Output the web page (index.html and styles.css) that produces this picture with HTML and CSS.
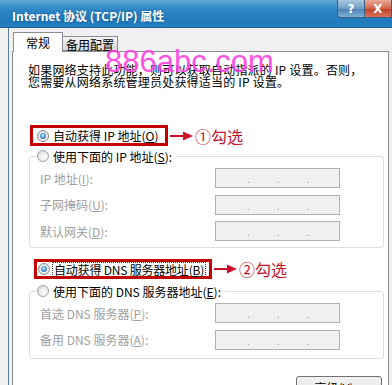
FILE: index.html
```html
<!DOCTYPE html>
<html lang="zh-CN">
<head>
    <meta charset="UTF-8">
    <title>Internet 协议 (TCP/IP) 属性</title>
    <link rel="stylesheet" href="styles.css">
</head>
<body>
    <div class="titlebar">
        <span class="title">Internet 协议 (TCP/IP) 属性</span>
        <div class="captionBtns">
            <span class="helpBtn">?</span>
            <span class="closeBtn">X</span>
        </div>
    </div>

    <div class="frame">
        <div class="tabs">
            <div class="tab active">常规</div>
            <div class="tab">备用配置</div>
        </div>

        <div class="panel">
            <p class="intro">如果网络支持此功能，则可以获取自动指派的 IP 设置。否则，<br>您需要从网络系统管理员处获得适当的 IP 设置。</p>

            <div class="markRow markOne">
                <div class="redBox">
                    <span class="radio checked"></span>
                    <span>自动获得 IP 地址(<u>O</u>)</span>
                </div>
                <svg class="arrow" width="24" height="10" viewBox="0 0 24 10">
                    <line x1="0" y1="5" x2="15" y2="5" stroke="#c8102e" stroke-width="2"/>
                    <polygon points="13,0.5 23,5 13,9.5" fill="#c8102e"/>
                </svg>
                <span class="note">①勾选</span>
            </div>

            <fieldset class="group groupIp">
                <legend><span class="radio"></span><span>使用下面的 IP 地址(<u>S</u>):</span></legend>
                <div class="row">
                    <label>IP 地址(<u>I</u>):</label>
                    <span class="ipBox"><i>.</i><i>.</i><i>.</i></span>
                </div>
                <div class="row">
                    <label>子网掩码(<u>U</u>):</label>
                    <span class="ipBox"><i>.</i><i>.</i><i>.</i></span>
                </div>
                <div class="row">
                    <label>默认网关(<u>D</u>):</label>
                    <span class="ipBox"><i>.</i><i>.</i><i>.</i></span>
                </div>
            </fieldset>

            <div class="markRow markTwo">
                <div class="redBox">
                    <span class="radio checked"></span>
                    <span class="focus">自动获得 DNS 服务器地址(<u>B</u>)</span>
                </div>
                <svg class="arrow" width="24" height="10" viewBox="0 0 24 10">
                    <line x1="0" y1="5" x2="15" y2="5" stroke="#c8102e" stroke-width="2"/>
                    <polygon points="13,0.5 23,5 13,9.5" fill="#c8102e"/>
                </svg>
                <span class="note">②勾选</span>
            </div>

            <fieldset class="group groupDns">
                <legend><span class="radio"></span><span>使用下面的 DNS 服务器地址(<u>E</u>):</span></legend>
                <div class="row">
                    <label>首选 DNS 服务器(<u>P</u>):</label>
                    <span class="ipBox"><i>.</i><i>.</i><i>.</i></span>
                </div>
                <div class="row">
                    <label>备用 DNS 服务器(<u>A</u>):</label>
                    <span class="ipBox"><i>.</i><i>.</i><i>.</i></span>
                </div>
            </fieldset>

            <div class="buttonRow">
                <button class="advBtn">高级(<u>V</u>)...</button>
            </div>
        </div>
    </div>

    <div class="watermark">886abc.com</div>
</body>
</html>
```

FILE: styles.css
```css
*{
    margin: 0;
    padding: 0;
    box-sizing: border-box;
}
body{
    width: 392px;
    height: 385px;
    overflow: hidden;
    position: relative;
    background-color: #f0f0f0;
    font-family: "Noto Sans CJK SC", sans-serif;
    font-size: 12px;
    color: #000;
}
u{
    text-decoration: underline;
}

/* title bar */
.titlebar{
    height: 28px;
    display: flex;
    justify-content: space-between;
    background: linear-gradient(#5ea6d6, #2f88c6 35%, #1f79bb 80%, #2a82c2);
    border-bottom: 1px solid #1a5e92;
}
.title{
    color: #fff;
    font-weight: bold;
    font-size: 12px;
    line-height: 28px;
    padding: 2px 0 0 12px;
    text-shadow: 0 0 3px #1d5a8a;
}
.captionBtns{
    display: flex;
    height: 18px;
    align-self: flex-start;
}
.helpBtn, .closeBtn{
    display: flex;
    align-items: center;
    justify-content: center;
    height: 18px;
    color: #fff;
    font-family: "DejaVu Sans", sans-serif;
    font-weight: bold;
    font-size: 12px;
    border: 1px solid #3b5f82;
    border-top: none;
}
.helpBtn{
    width: 28px;
    border-radius: 0 0 0 4px;
    background: linear-gradient(#a9c8e0, #6f9dc4 50%, #4f86b6 55%, #7eb1d6);
}
.closeBtn{
    width: 27px;
    border-left: none;
    background: linear-gradient(#e9a99a, #d4644c 50%, #c2412a 55%, #d9735c);
}

/* dialog frame + tabs */
.frame{
    margin-left: 8px;
    border-left: 1px solid #5f7f9e;
    padding: 4px 3px 0 3px;
    height: 357px;
}
.tabs{
    display: flex;
    height: 20px;
    padding-left: 1px;
}
.tab{
    display: flex;
    align-items: center;
    justify-content: center;
    border: 1px solid #898c95;
}
.tab.active{
    width: 50px;
    height: 20px;
    background-color: #fff;
    border-bottom: none;
    position: relative;
    z-index: 1;
    padding-bottom: 1px;
}
.tab:not(.active){
    width: 55px;
    height: 15px;
    align-self: flex-end;
    margin-bottom: 1px;
    border-left: none;
    background: linear-gradient(#f4f4f4, #e6e6e6 50%, #d9d9d9);
    padding-top: 1px;
}
.panel{
    margin-top: -1px;
    height: 340px;
    background-color: #fff;
    border: 1px solid #898c95;
    border-bottom: none;
    padding: 12px 0 0 15px;
}
.intro{
    line-height: 12px;
    white-space: nowrap;
    letter-spacing: 0.2px;
}

/* red highlighted choices */
.markRow{
    display: flex;
    align-items: center;
    white-space: nowrap;
}
.markOne{
    margin: 37px 0 0 2px;
    height: 21px;
}
.markTwo{
    margin: 11px 0 0 6px;
    height: 20px;
}
.redBox{
    display: flex;
    align-items: center;
    gap: 4px;
    height: 100%;
    border: 3px solid #c40000;
    padding-left: 4px;
    flex-shrink: 0;
}
.markOne .redBox{
    width: 138px;
}
.markTwo .redBox{
    width: 178px;
    padding-left: 1px;
    gap: 3px;
}
.focus{
    outline: 1px dotted #333;
    padding: 0 1px;
    line-height: 13px;
    letter-spacing: -0.2px;
}
.arrow{
    margin-left: 2px;
    flex-shrink: 0;
}
.note{
    color: #c8102e;
    font-size: 16px;
    line-height: 20px;
    margin-left: 1px;
}

/* radio buttons */
.radio{
    width: 12px;
    height: 12px;
    border-radius: 50%;
    border: 1px solid #a2a2a2;
    background: radial-gradient(circle at 60% 65%, #ffffff, #e2e2e2 70%, #cfcfcf);
    display: inline-flex;
    align-items: center;
    justify-content: center;
    flex-shrink: 0;
}
.radio.checked{
    border-color: #8b8b8b;
}
.radio.checked::after{
    content: "";
    width: 6px;
    height: 6px;
    border-radius: 50%;
    background: radial-gradient(circle at 45% 40%, #cfeaff, #4d97d2 50%, #123f77);
}

/* group boxes */
.group{
    margin-left: 1px;
    width: 355px;
    border: 1px solid #d5dfe5;
    border-radius: 3px;
    padding: 5px 0 6px 10px;
}
.groupIp{
    margin-top: 3px;
}
.groupDns{
    margin-top: 5px;
    padding-bottom: 8px;
}
.group legend{
    display: flex;
    align-items: center;
    gap: 4px;
    height: 14px;
    margin-left: -4px;
    padding: 0 4px 0 1px;
    white-space: nowrap;
}
.row{
    display: flex;
    align-items: center;
    height: 20px;
}
.row + .row{
    margin-top: 6.5px;
}
.row label{
    width: 175px;
    color: #a0a0a0;
}
.ipBox{
    display: flex;
    width: 125px;
    height: 20px;
    background-color: #f0f0f0;
    border: 1px solid #b0b0b0;
    padding-left: 31px;
    gap: 27px;
    color: #9a9a9a;
    font-size: 10px;
    line-height: 20px;
}
.ipBox i{
    font-style: normal;
}

/* bottom button */
.buttonRow{
    display: flex;
    justify-content: flex-end;
    padding-right: 6px;
    margin-top: 17px;
}
.advBtn{
    width: 86px;
    height: 23px;
    font-family: "Noto Sans CJK SC", sans-serif;
    font-size: 12px;
    border: 1px solid #707070;
    border-radius: 3px;
    background: linear-gradient(#f2f2f2, #ebebeb 50%, #dddddd 51%, #cfcfcf);
}

/* watermark laid over the dialog */
.watermark{
    position: absolute;
    left: 105px;
    top: 46px;
    z-index: 5;
    font-family: "Liberation Sans", sans-serif;
    font-size: 31px;
    line-height: 1;
    color: #ff3fe0;
    opacity: 0.9;
}
```
